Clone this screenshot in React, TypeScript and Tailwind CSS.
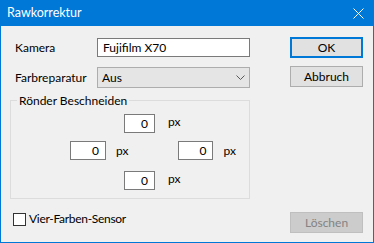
const FONT = "font-['Lato',sans-serif]";

function NumField({ className = "" }: { className?: string }) {
  return (
    <div
      className={`flex h-[19px] items-center justify-end border border-[#7a7a7a] bg-white pr-[6px] text-[12px] text-black ${className}`}
    >
      0
    </div>
  );
}

function Btn({
  children,
  focused,
  disabled,
  className = "",
}: {
  children: string;
  focused?: boolean;
  disabled?: boolean;
  className?: string;
}) {
  const look = focused
    ? "border-2 border-[#0078d7] bg-[#e1e1e1] text-black"
    : disabled
      ? "border border-[#bfbfbf] bg-[#cccccc] text-[#838383]"
      : "border border-[#adadad] bg-[#e1e1e1] text-black";
  return (
    <div
      className={`flex h-[21px] w-[73px] items-center justify-center text-[12px] ${look} ${className}`}
    >
      {children}
    </div>
  );
}

export default function App() {
  return (
    <div
      className={`flex h-[243px] w-[374px] flex-col border border-t-0 border-[#0078d7] bg-[#f0f0f0] ${FONT} text-[12px] text-black`}
    >
      {/* title bar */}
      <div className="-mx-px flex h-[26px] shrink-0 items-center justify-between bg-[#0078d7] pl-[7px] pr-[10px] text-white">
        <span className="text-[12.5px]">Rawkorrektur</span>
        <svg width="11" height="11" viewBox="0 0 11 11" stroke="white" strokeWidth="1">
          <path d="M0.5 0.5 L10.5 10.5 M10.5 0.5 L0.5 10.5" />
        </svg>
      </div>

      <div className="flex flex-1">
        {/* left column */}
        <div className="ml-[9px] flex w-[240px] flex-col">
          <div className="mt-[11px] flex h-[21px] items-center">
            <span className="ml-[5px] w-[82px]">Kamera</span>
            <div className="flex h-[19px] flex-1 items-center border border-[#7a7a7a] bg-white pl-[5px]">
              Fujifilm X70
            </div>
          </div>

          <div className="mt-[9px] flex h-[21px] items-center">
            <span className="ml-[5px] w-[82px]">Farbreparatur</span>
            <div className="flex h-[21px] flex-1 items-center justify-between border border-[#adadad] bg-[#e5e5e5] pl-[4px] pr-[4px]">
              <span>Aus</span>
              <svg width="9" height="5" viewBox="0 0 9 5" fill="none" stroke="#5a5a5a" strokeWidth="1">
                <path d="M0.5 0.5 L4.5 4.5 L8.5 0.5" />
              </svg>
            </div>
          </div>

          <fieldset className="mt-[5px] h-[106px] border border-[#dcdcdc] px-0 pb-0">
            <legend className="ml-[6px] px-[2px] leading-[15px]">Rönder Beschneiden</legend>
            <div className="mt-[6px] flex items-center pl-[113px]">
              <NumField className="w-[31px]" />
              <span className="ml-[13px] -mt-[4px]">px</span>
            </div>
            <div className="mt-[8px] flex items-center pl-[59px]">
              <NumField className="w-[36px]" />
              <span className="ml-[10px]">px</span>
              <NumField className="ml-[50px] w-[35px]" />
              <span className="ml-[10px]">px</span>
            </div>
            <div className="mt-[11px] flex items-center pl-[113px]">
              <NumField className="w-[31px]" />
              <span className="ml-[13px] -mt-[4px]">px</span>
            </div>
          </fieldset>

          <div className="mt-[11px] flex items-center">
            <div className="ml-[3px] h-[13px] w-[13px] border border-[#333333] bg-white" />
            <span className="ml-[3px] tracking-[-0.3px]">Vier-Farben-Sensor</span>
          </div>
        </div>

        {/* right column */}
        <div className="ml-[40px] flex flex-col">
          <Btn focused className="mt-[11px]">OK</Btn>
          <Btn className="mt-[8px]">Abbruch</Btn>
          <Btn disabled className="mt-auto mb-[9px]">Löschen</Btn>
        </div>
      </div>
    </div>
  );
}
